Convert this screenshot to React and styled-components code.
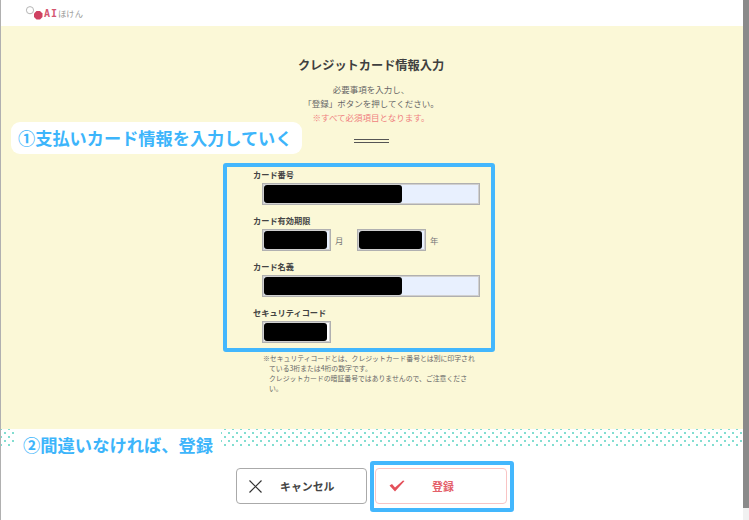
import React from "react";
import styled, { createGlobalStyle } from "styled-components";

const GlobalStyle = createGlobalStyle`
  html, body {
    margin: 0;
    padding: 0;
    background: #fff;
    overflow: hidden;
  }
  * {
    box-sizing: border-box;
  }
`;

const Logo = () => (
  <LogoWrap>
    <svg width="20" height="14" viewBox="0 0 20 14">
      <circle cx="5" cy="4.2" r="3.6" fill="#fff" stroke="#b5b5b5" strokeWidth="1" />
      <polygon
        points="11.5,5 15,5 17.5,7.5 17.5,11 15,13.5 11.5,13.5 9,11 9,7.5"
        fill="#cf4161"
      />
    </svg>
    <LogoAi>AI</LogoAi>
    <LogoKana>ほけん</LogoKana>
  </LogoWrap>
);

const CardInput = ({ width, filled, plain }) => (
  <InputBox $width={width} $plain={plain}>
    <Redacted $width={filled} />
  </InputBox>
);

const Field = ({ label, children }) => (
  <FieldWrap>
    <FieldLabel>{label}</FieldLabel>
    <FieldRow>{children}</FieldRow>
  </FieldWrap>
);

const App = () => {
  return (
    <>
      <GlobalStyle />
      <Page>
        <Content>
          <Header>
            <Logo />
          </Header>
          <Main>
            <Callout>①支払いカード情報を入力していく</Callout>
            <Title>クレジットカード情報入力</Title>
            <Lead>
              必要事項を入力し、
              <br />
              「登録」ボタンを押してください。
              <br />
              <Required>※すべて必須項目となります。</Required>
            </Lead>
            <DoubleLine />
            <FormBox>
              <Field label="カード番号">
                <CardInput width={218} filled={138} />
              </Field>
              <Field label="カード有効期限">
                <CardInput width={69} filled={63} />
                <Unit>月</Unit>
                <CardInput width={69} filled={63} />
                <Unit>年</Unit>
              </Field>
              <Field label="カード名義">
                <CardInput width={218} filled={138} />
              </Field>
              <Field label="セキュリティコード">
                <CardInput width={69} filled={63} plain />
              </Field>
            </FormBox>
            <Note>
              ※セキュリティコードとは、クレジットカード番号とは別に印字され
              <NoteIndent>
                ている3桁または4桁の数字です。
                <br />
                クレジットカードの暗証番号ではありませんので、ご注意くださ
                <br />
                い。
              </NoteIndent>
            </Note>
          </Main>
          <Footer>
            <Callout2>②間違いなければ、登録</Callout2>
            <DotBand />
            <Buttons>
              <ActionButton>
                <svg width="15" height="15" viewBox="0 0 15 15">
                  <path d="M1.5 1.5 L13.5 13.5 M13.5 1.5 L1.5 13.5" stroke="#333" strokeWidth="1.2" fill="none" />
                </svg>
                <ButtonLabel $left={17}>キャンセル</ButtonLabel>
              </ActionButton>
              <Highlight>
                <ActionButton $primary>
                  <svg width="16" height="12" viewBox="0 0 16 12">
                    <path d="M0.5 5.5 L3 4 L6 7.5 L14 0.5 L15.5 1 L6 11.5 Z" fill="#e4505a" />
                  </svg>
                  <ButtonLabel $left={27} $primary>登録</ButtonLabel>
                </ActionButton>
              </Highlight>
            </Buttons>
          </Footer>
        </Content>
        <Scrollbar>
          <ScrollThumb />
        </Scrollbar>
      </Page>
    </>
  );
};

const Page = styled.div`
  display: flex;
  width: 749px;
  height: 520px;
  overflow: hidden;
  border-left: 1px solid #b0b0b0;
  font-family: "Noto Sans CJK JP", "Noto Sans", sans-serif;
  color: #444;
`;

const Content = styled.div`
  flex: 1;
  min-width: 0;
  display: flex;
  flex-direction: column;
`;

const Scrollbar = styled.div`
  width: 6px;
  background: #f1f1f1;
`;

const ScrollThumb = styled.div`
  height: 508px;
  background: #8a8a8a;
`;

const Header = styled.header`
  height: 26px;
  background: #fff;
  padding-left: 24px;
`;

const LogoWrap = styled.div`
  display: flex;
  align-items: flex-start;
  padding-top: 6px;
`;

const LogoAi = styled.span`
  margin-left: -1px;
  padding-top: 3px;
  font: 700 10px/10px "DejaVu Sans Mono", monospace;
  letter-spacing: 1px;
  color: #d4566f;
`;

const LogoKana = styled.span`
  padding-top: 2px;
  font-size: 8.3px;
  line-height: 10px;
  color: #999;
`;

const Main = styled.main`
  position: relative;
  height: 403px;
  padding: 30px 2px 0 0;
  background: #fbf8d7;
  display: flex;
  flex-direction: column;
  align-items: center;
`;

const Callout = styled.div`
  position: absolute;
  left: 10px;
  top: 96px;
  width: 291px;
  height: 32px;
  padding-left: 7px;
  border-radius: 9px;
  background: #fff;
  font-size: 17.2px;
  font-weight: 700;
  line-height: 32px;
  white-space: nowrap;
  color: #3db5fb;
`;

const Title = styled.h1`
  margin: 0;
  height: 18px;
  font-size: 12.2px;
  font-weight: 700;
  line-height: 18px;
  color: #3f3f3f;
`;

const Lead = styled.p`
  margin: 8px 0 0;
  font-size: 8.5px;
  line-height: 14px;
  text-align: center;
  color: #666;
`;

const Required = styled.span`
  color: #f07f7f;
`;

const DoubleLine = styled.div`
  width: 35px;
  height: 4px;
  margin-top: 15px;
  border-top: 1px solid #555;
  border-bottom: 1px solid #555;
`;

const FormBox = styled.section`
  align-self: flex-start;
  width: 272px;
  height: 189px;
  margin: 20px 0 0 222px;
  padding: 1px 0 0 26px;
  border: 4px solid #43b7fd;
  border-radius: 3px;
  display: flex;
  flex-direction: column;
  gap: 9px;
`;

const FieldWrap = styled.div`
  display: flex;
  flex-direction: column;
`;

const FieldLabel = styled.label`
  height: 12px;
  margin-bottom: 3px;
  font-size: 8.2px;
  font-weight: 700;
  line-height: 12px;
  white-space: nowrap;
  color: #444;
`;

const FieldRow = styled.div`
  display: flex;
  align-items: center;
  margin-left: 9px;
  height: 22px;
`;

const InputBox = styled.div`
  width: ${(p) => p.$width}px;
  height: 22px;
  padding: 1px;
  border: 1px solid #b0b0b0;
  box-shadow: inset 0 0 0 1px #d0d0d0;
  background: ${(p) => (p.$plain ? "#fff" : "#e8f0fe")};
  display: flex;
`;

const Redacted = styled.div`
  width: ${(p) => p.$width}px;
  height: 100%;
  border-radius: 3px;
  background: #000;
`;

const Unit = styled.span`
  width: 26px;
  padding-left: 4px;
  font-size: 8.4px;
  color: #777;
`;

const Note = styled.div`
  align-self: flex-start;
  width: 218px;
  margin: 1px 0 0 262px;
  font-size: 6.85px;
  line-height: 10px;
  white-space: nowrap;
  color: #666;
`;

const NoteIndent = styled.div`
  padding-left: 6px;
`;

const Footer = styled.footer`
  position: relative;
  flex: 1;
  background: #fff;
`;

const Callout2 = styled.div`
  position: absolute;
  left: 14px;
  top: 0;
  width: 206px;
  height: 32px;
  padding-left: 8px;
  background: #fff;
  font-size: 17.3px;
  font-weight: 700;
  line-height: 32px;
  white-space: nowrap;
  color: #3db5fb;
`;

const DotBand = styled.div`
  height: 18px;
  background-color: #fff;
  background-image: radial-gradient(circle, #7fdccf 0.7px, transparent 1.1px),
    radial-gradient(circle, #7fdccf 0.7px, transparent 1.1px);
  background-size: 8px 8px;
  background-position: 0 0, 4px 4px;
`;

const Buttons = styled.div`
  display: flex;
  align-items: flex-start;
  gap: 3px;
  margin: 14px 0 0 235px;
`;

const Highlight = styled.div`
  padding: 3px 3px 4px 1px;
  border: 4px solid #43b7fd;
  border-radius: 3px;
`;

const ActionButton = styled.button`
  width: ${(p) => (p.$primary ? 132 : 131)}px;
  height: 36px;
  margin-top: ${(p) => (p.$primary ? 0 : 7)}px;
  padding: 0 0 0 ${(p) => (p.$primary ? 13 : 11)}px;
  border: 1px solid ${(p) => (p.$primary ? "#f9c4c4" : "#aaa")};
  border-radius: 4px;
  background: #fff;
  display: flex;
  align-items: center;
  font-family: inherit;
`;

const ButtonLabel = styled.span`
  margin-left: ${(p) => p.$left}px;
  font-size: 10.9px;
  font-weight: 700;
  color: ${(p) => (p.$primary ? "#e4606a" : "#444")};
`;

export default App;
